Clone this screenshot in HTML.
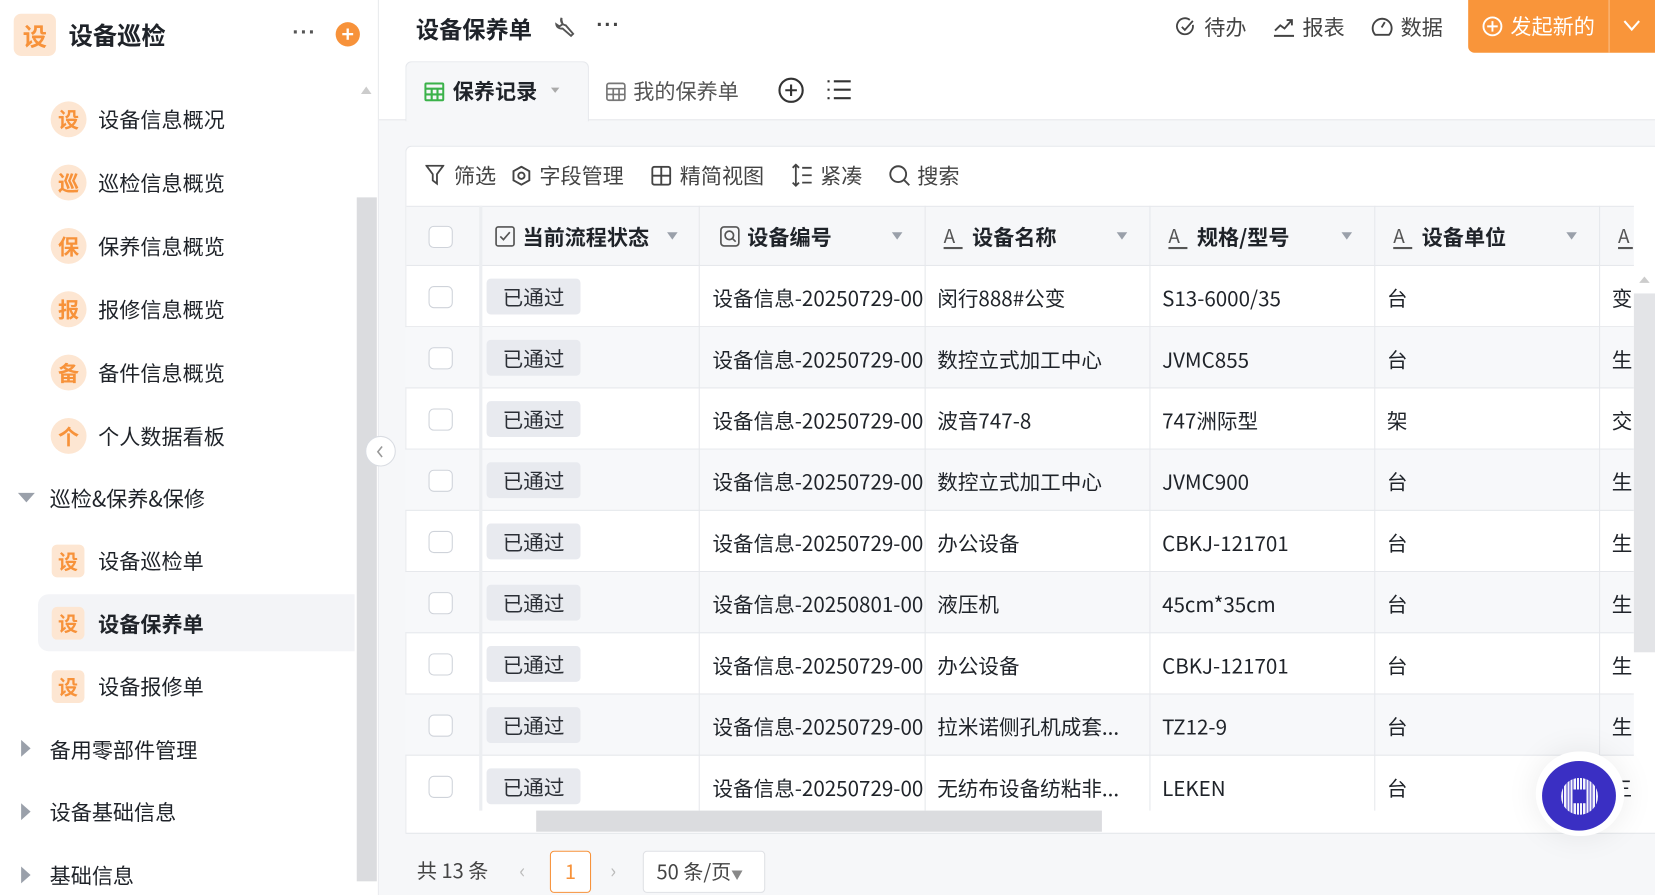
<!DOCTYPE html>
<html><head><meta charset="utf-8"><style>
*{box-sizing:border-box;margin:0;padding:0}
html,body{width:1655px;height:895px;overflow:hidden;background:#fff}
#w{position:absolute;left:0;top:0;width:1568px;height:848px;transform:scale(1.05548);transform-origin:0 0;font-family:"Noto Sans CJK SC","Liberation Sans",sans-serif;color:#1f2329;overflow:hidden;line-height:1.3}
.a{position:absolute}
.dots{font-family:"Liberation Sans",sans-serif;font-weight:bold;letter-spacing:1px}
.ic{position:absolute;left:48px;width:34px;height:34px;border-radius:50%;background:#fde6d2;color:#f7923a;font-weight:bold;font-size:20px;text-align:center;line-height:34px}
.sq{position:absolute;left:49px;width:31px;height:31px;border-radius:5px;background:#fde6d2;color:#f7923a;font-weight:bold;font-size:19px;text-align:center;line-height:31px}
.st{position:absolute;left:93px;font-size:20px;line-height:26px}
.gt{position:absolute;left:47px;font-size:20px;line-height:26px}
.tri{position:absolute;left:20px;width:0;height:0}
.row{position:absolute;left:384px;width:1164px;height:58px;border-bottom:1px solid #e6e8ec;font-size:19.5px}
.row div{position:absolute;top:1px;height:56px;line-height:57px;white-space:nowrap;overflow:hidden}
.cb{left:22px!important;top:19px!important;width:23px;height:21px!important;border:1px solid #cfd3da;border-radius:5px;background:#fff}
.tag{left:77px!important;top:12px!important;height:34px!important;line-height:34px!important;width:89px;background:#e8eaef;border-radius:4px;text-align:center;color:#2b2f36}
.vl{position:absolute;top:195px;height:573px;width:1px;background:#e6e8ec}
.hd{position:absolute;top:195px;height:57px;line-height:57px;font-size:20px;font-weight:bold}
.dd{position:absolute;top:220px;width:0;height:0;border-left:5px solid transparent;border-right:5px solid transparent;border-top:7px solid #9aa0aa}
</style></head><body><div id="w">
<!-- sidebar -->
<div class="a" style="left:358px;top:0;width:1px;height:848px;background:#e8eaed"></div>
<div class="a" style="left:13px;top:13px;width:40px;height:40px;border-radius:7px;background:#fde6d2;color:#f7923a;font-weight:bold;font-size:23px;text-align:center;line-height:40px">设</div>
<div class="a" style="left:65px;top:16px;font-size:23px;font-weight:bold;line-height:32px">设备巡检</div>
<div class="a dots" style="left:277px;top:18px;font-size:20px;color:#555">···</div>
<div class="a" style="left:318px;top:21px;width:23px;height:23px;border-radius:50%;background:#f7923a;color:#fff;font-size:20px;font-weight:bold;text-align:center;line-height:22px">+</div>
<div class="a" style="left:342px;top:82px;border-left:5px solid transparent;border-right:5px solid transparent;border-bottom:7px solid #ccc"></div>
<div class="a" style="left:338px;top:187px;width:19px;height:648px;background:#dbdcdf"></div>

<div class="ic" style="top:96px">设</div><div class="st" style="top:100px">设备信息概况</div>
<div class="ic" style="top:156px">巡</div><div class="st" style="top:160px">巡检信息概览</div>
<div class="ic" style="top:216px">保</div><div class="st" style="top:220px">保养信息概览</div>
<div class="ic" style="top:276px">报</div><div class="st" style="top:280px">报修信息概览</div>
<div class="ic" style="top:336px">备</div><div class="st" style="top:340px">备件信息概览</div>
<div class="ic" style="top:396px">个</div><div class="st" style="top:400px">个人数据看板</div>
<div class="tri" style="top:467px;left:17px;border-left:8px solid transparent;border-right:8px solid transparent;border-top:9px solid #9aa0aa"></div>
<div class="gt" style="top:459px">巡检&amp;保养&amp;保修</div>
<div class="sq" style="top:516px">设</div><div class="st" style="top:518px">设备巡检单</div>
<div class="a" style="left:36px;top:563px;width:300px;height:54px;background:#f3f4f7;border-radius:10px 0 0 10px"></div>
<div class="sq" style="top:575px">设</div><div class="st" style="top:578px;font-weight:bold">设备保养单</div>
<div class="sq" style="top:635px">设</div><div class="st" style="top:637px">设备报修单</div>
<div class="tri" style="top:701px;border-top:8px solid transparent;border-bottom:8px solid transparent;border-left:9px solid #9aa0aa"></div>
<div class="gt" style="top:697px">备用零部件管理</div>
<div class="tri" style="top:761px;border-top:8px solid transparent;border-bottom:8px solid transparent;border-left:9px solid #9aa0aa"></div>
<div class="gt" style="top:756px">设备基础信息</div>
<div class="tri" style="top:821px;border-top:8px solid transparent;border-bottom:8px solid transparent;border-left:9px solid #9aa0aa"></div>
<div class="gt" style="top:816px">基础信息</div>

<!-- header -->
<div class="a" style="left:394px;top:12px;font-size:22px;font-weight:bold;line-height:30px">设备保养单</div>
<svg class="a" style="left:526px;top:15px" width="20" height="22" viewBox="0 0 20 22" fill="none" stroke="#555" stroke-width="1.8"><path d="M6 2a5 5 0 0 0 4 7l7 8-2 2-8-7a5 5 0 0 1-6-4l3 2 3-2-1-4z"/></svg>
<div class="a dots" style="left:565px;top:11px;font-size:20px;color:#444">···</div>
<svg class="a" style="left:1114px;top:16px" width="19" height="19" viewBox="0 0 20 20" fill="none" stroke="#444" stroke-width="1.8"><path d="M17 8a8 8 0 1 1-3-5"/><path d="M6 10l3 3 8-9"/></svg>
<div class="a" style="left:1141px;top:12px;font-size:20px;color:#444">待办</div>
<svg class="a" style="left:1206px;top:16px" width="21" height="19" viewBox="0 0 21 19" fill="none" stroke="#444" stroke-width="1.8"><path d="M2 13l5-5 4 3 7-8M13 3h5v5M1 18h19"/></svg>
<div class="a" style="left:1234px;top:12px;font-size:20px;color:#444">报表</div>
<svg class="a" style="left:1299px;top:15px" width="21" height="20" viewBox="0 0 21 20" fill="none" stroke="#444" stroke-width="1.8"><path d="M4 18a9 9 0 1 1 13 0z"/><path d="M10 11l3-5"/></svg>
<div class="a" style="left:1327px;top:12px;font-size:20px;color:#444">数据</div>
<div class="a" style="left:1391px;top:0;width:177px;height:50px;background:#f9953a;border-radius:0 0 0 6px"></div>
<div class="a" style="left:1524px;top:0;width:1px;height:50px;background:#fbc08a"></div>
<svg class="a" style="left:1404px;top:15px" width="20" height="20" viewBox="0 0 20 20" fill="none" stroke="#fff" stroke-width="1.8"><circle cx="10" cy="10" r="8.5"/><path d="M10 5v10M5 10h10"/></svg>
<div class="a" style="left:1431px;top:11px;font-size:20px;color:#fff">发起新的</div>
<svg class="a" style="left:1537px;top:18px" width="18" height="12" viewBox="0 0 18 12" fill="none" stroke="#fff" stroke-width="2"><path d="M2 2l7 8 7-8"/></svg>

<!-- tabs -->
<div class="a" style="left:359px;top:113px;width:1209px;height:735px;background:#f6f7f9;border-top:1px solid #e6e8ec"></div>
<div class="a" style="left:384px;top:58px;width:174px;height:57px;background:#f6f7f9;border:1px solid #e6e8ec;border-bottom:none;border-radius:6px 6px 0 0"></div>
<svg class="a" style="left:402px;top:78px" width="19" height="18" viewBox="0 0 19 18" fill="none" stroke="#3bb24a" stroke-width="2"><rect x="1" y="1" width="17" height="16" rx="1"/><path d="M1 6h17M1 11.5h17M7 6v11M12.5 6v11"/></svg>
<div class="a" style="left:429px;top:73px;font-size:20px;font-weight:bold">保养记录</div>
<div class="a" style="left:522px;top:83px;border-left:4px solid transparent;border-right:4px solid transparent;border-top:5px solid #aaa"></div>
<svg class="a" style="left:574px;top:78px" width="19" height="18" viewBox="0 0 19 18" fill="none" stroke="#777" stroke-width="1.6"><rect x="1" y="1" width="17" height="16" rx="2"/><path d="M1 6h17M1 11.5h17M7 6v11M12.5 6v11"/></svg>
<div class="a" style="left:600px;top:73px;font-size:20px;color:#555">我的保养单</div>
<svg class="a" style="left:737px;top:73px" width="25" height="25" viewBox="0 0 25 25" fill="none" stroke="#333" stroke-width="2"><circle cx="12.5" cy="12.5" r="11"/><path d="M12.5 7v11M7 12.5h11"/></svg>
<svg class="a" style="left:783px;top:75px" width="24" height="20" viewBox="0 0 24 20" fill="none" stroke="#333" stroke-width="2"><path d="M1 2h2M1 10h2M1 18h2M7 2h16M7 10h16M7 18h16"/></svg>
<div class="a" style="left:346px;top:413px;width:29px;height:29px;border-radius:50%;border:1px solid #d9dce2;background:#fff"></div>
<svg class="a" style="left:355px;top:421px" width="10" height="14" viewBox="0 0 10 14" fill="none" stroke="#999" stroke-width="1.5"><path d="M7 2L3 7l4 5"/></svg>

<!-- card -->
<div class="a" style="left:384px;top:138px;width:1184px;height:652px;background:#fff;border:1px solid #e6e8ec;border-right:none;border-radius:6px 0 0 0"></div>
<svg class="a" style="left:403px;top:156px" width="18" height="20" viewBox="0 0 18 20" fill="none" stroke="#444" stroke-width="1.7"><path d="M1 1h16l-6 8v9l-4-3V9z"/></svg>
<div class="a" style="left:430px;top:153px;font-size:20px;color:#444">筛选</div>
<svg class="a" style="left:485px;top:157px" width="18" height="19" viewBox="0 0 18 19" fill="none" stroke="#444" stroke-width="1.8"><path d="M9 1l7.5 4.2v8.6L9 18l-7.5-4.2V5.2z"/><circle cx="9" cy="9.5" r="3"/></svg>
<div class="a" style="left:511px;top:153px;font-size:20px;color:#444">字段管理</div>
<svg class="a" style="left:617px;top:157px" width="19" height="19" viewBox="0 0 19 19" fill="none" stroke="#444" stroke-width="1.8"><rect x="1" y="1" width="17" height="17" rx="2"/><path d="M9.5 1v17M1 9.5h17"/></svg>
<div class="a" style="left:644px;top:153px;font-size:20px;color:#444">精简视图</div>
<svg class="a" style="left:750px;top:155px" width="20" height="22" viewBox="0 0 20 22" fill="none" stroke="#444" stroke-width="1.7"><path d="M4 1v20M1 4l3-3 3 3M1 18l3 3 3-3M10 4h9M10 11h9M10 18h9"/></svg>
<div class="a" style="left:777px;top:153px;font-size:20px;color:#444">紧凑</div>
<svg class="a" style="left:842px;top:156px" width="21" height="21" viewBox="0 0 21 21" fill="none" stroke="#444" stroke-width="1.8"><circle cx="9" cy="9" r="7.5"/><path d="M14.5 14.5l5 5"/></svg>
<div class="a" style="left:869px;top:153px;font-size:20px;color:#444">搜索</div>

<!-- table header -->
<div class="a" style="left:385px;top:195px;width:1163px;height:57px;background:#f6f7f9;border-top:1px solid #e6e8ec;border-bottom:1px solid #e6e8ec"></div>
<div class="a" style="left:406px;top:214px;width:23px;height:21px;border:1px solid #cfd3da;border-radius:5px;background:#fff"></div>
<svg class="a" style="left:469px;top:214px" width="19" height="20" viewBox="0 0 19 20" fill="none" stroke="#555" stroke-width="1.6"><rect x="1" y="1" width="17" height="18" rx="2"/><path d="M5 10l3 3 6-7"/></svg>
<div class="hd" style="left:495px">当前流程状态</div><div class="dd" style="left:632px"></div>
<svg class="a" style="left:682px;top:214px" width="19" height="20" viewBox="0 0 19 20" fill="none" stroke="#555" stroke-width="1.6"><rect x="1" y="1" width="17" height="18" rx="3"/><circle cx="9" cy="9" r="4"/><path d="M12 12l3 3"/></svg>
<div class="hd" style="left:708px">设备编号</div><div class="dd" style="left:845px"></div>
<div class="hd" style="left:894px;font-weight:normal;color:#555;font-size:18px">A</div><div class="a" style="left:894px;top:234px;width:18px;height:2px;background:#555"></div>
<div class="hd" style="left:921px">设备名称</div><div class="dd" style="left:1058px"></div>
<div class="hd" style="left:1107px;font-weight:normal;color:#555;font-size:18px">A</div><div class="a" style="left:1107px;top:234px;width:18px;height:2px;background:#555"></div>
<div class="hd" style="left:1134px">规格/型号</div><div class="dd" style="left:1271px"></div>
<div class="hd" style="left:1320px;font-weight:normal;color:#555;font-size:18px">A</div><div class="a" style="left:1320px;top:234px;width:18px;height:2px;background:#555"></div>
<div class="hd" style="left:1347px">设备单位</div><div class="dd" style="left:1484px"></div>
<div class="hd" style="left:1533px;font-weight:normal;color:#555;font-size:18px">A</div><div class="a" style="left:1533px;top:234px;width:14px;height:2px;background:#555"></div>

<!-- rows -->
<div class="row" style="top:252px"><div class="cb"></div><div class="tag">已通过</div><div style="left:291px;width:200px">设备信息-20250729-00</div><div style="left:504px;width:200px">闵行888#公变</div><div style="left:717px">S13-6000/35</div><div style="left:930px">台</div><div style="left:1143px">变</div></div>
<div class="row" style="top:310px;background:#f7f8fa"><div class="cb"></div><div class="tag">已通过</div><div style="left:291px;width:200px">设备信息-20250729-00</div><div style="left:504px;width:200px">数控立式加工中心</div><div style="left:717px">JVMC855</div><div style="left:930px">台</div><div style="left:1143px">生</div></div>
<div class="row" style="top:368px"><div class="cb"></div><div class="tag">已通过</div><div style="left:291px;width:200px">设备信息-20250729-00</div><div style="left:504px;width:200px">波音747-8</div><div style="left:717px">747洲际型</div><div style="left:930px">架</div><div style="left:1143px">交</div></div>
<div class="row" style="top:426px;background:#f7f8fa"><div class="cb"></div><div class="tag">已通过</div><div style="left:291px;width:200px">设备信息-20250729-00</div><div style="left:504px;width:200px">数控立式加工中心</div><div style="left:717px">JVMC900</div><div style="left:930px">台</div><div style="left:1143px">生</div></div>
<div class="row" style="top:484px"><div class="cb"></div><div class="tag">已通过</div><div style="left:291px;width:200px">设备信息-20250729-00</div><div style="left:504px;width:200px">办公设备</div><div style="left:717px">CBKJ-121701</div><div style="left:930px">台</div><div style="left:1143px">生</div></div>
<div class="row" style="top:542px;background:#f7f8fa"><div class="cb"></div><div class="tag">已通过</div><div style="left:291px;width:200px">设备信息-20250801-00</div><div style="left:504px;width:200px">液压机</div><div style="left:717px">45cm*35cm</div><div style="left:930px">台</div><div style="left:1143px">生</div></div>
<div class="row" style="top:600px"><div class="cb"></div><div class="tag">已通过</div><div style="left:291px;width:200px">设备信息-20250729-00</div><div style="left:504px;width:200px">办公设备</div><div style="left:717px">CBKJ-121701</div><div style="left:930px">台</div><div style="left:1143px">生</div></div>
<div class="row" style="top:658px;background:#f7f8fa"><div class="cb"></div><div class="tag">已通过</div><div style="left:291px;width:200px">设备信息-20250729-00</div><div style="left:504px;width:200px">拉米诺侧孔机成套...</div><div style="left:717px">TZ12-9</div><div style="left:930px">台</div><div style="left:1143px">生</div></div>
<div class="row" style="top:716px;border-bottom:none;height:52px"><div class="cb"></div><div class="tag">已通过</div><div style="left:291px;width:200px">设备信息-20250729-00</div><div style="left:504px;width:200px">无纺布设备纺粘非...</div><div style="left:717px">LEKEN</div><div style="left:930px">台</div><div style="left:1143px">三</div></div>
<div class="vl" style="left:454px;width:3px;background:#eceef1"></div><div class="vl" style="left:662px"></div><div class="vl" style="left:876px"></div><div class="vl" style="left:1089px"></div><div class="vl" style="left:1302px"></div><div class="vl" style="left:1515px"></div>
<!-- scrollbars -->
<div class="a" style="left:1548px;top:252px;width:20px;height:516px;background:#fff"></div>
<div class="a" style="left:1548px;top:278px;width:20px;height:340px;background:#e3e4e7"></div>
<div class="a" style="left:1553px;top:262px;border-left:5px solid transparent;border-right:5px solid transparent;border-bottom:6px solid #ccc"></div>
<div class="a" style="left:508px;top:768px;width:536px;height:20px;background:#dbdcdf"></div>
<div class="a" style="left:385px;top:789px;width:1183px;height:1px;background:#e6e8ec"></div>

<!-- footer -->
<div class="a" style="left:395px;top:813px;font-size:19px;color:#444">共 13 条</div>
<div class="a" style="left:492px;top:813px;font-size:19px;color:#bbb">‹</div>
<div class="a" style="left:521px;top:806px;width:39px;height:40px;border:1px solid #f7923a;border-radius:4px;color:#f7923a;text-align:center;line-height:38px;font-size:19px;background:#fff">1</div>
<div class="a" style="left:578px;top:813px;font-size:19px;color:#bbb">›</div>
<div class="a" style="left:609px;top:806px;width:116px;height:40px;border:1px solid #dfe1e5;border-radius:4px;background:#fff;font-size:19px;color:#444;line-height:38px;padding-left:12px">50 条/页<span style="font-size:11px;color:#888">▼</span></div>

<!-- floating -->
<div class="a" style="left:1455px;top:712px;width:84px;height:80px;border-radius:40px;background:#fff;box-shadow:0 0 30px rgba(0,0,0,.08)"></div>
<div class="a" style="left:1461px;top:721px;width:70px;height:66px;border-radius:50%;background:#3a2fc3"></div>
<div class="a" style="left:1479px;top:737px;width:35px;height:35px;border-radius:50%;background:repeating-linear-gradient(90deg,#fff 0 2px,transparent 2px 3px),#3a2fc3;opacity:.95"></div>
<div class="a" style="left:1490px;top:748px;width:13px;height:13px;background:#3a2fc3"></div>
</div></body></html>
